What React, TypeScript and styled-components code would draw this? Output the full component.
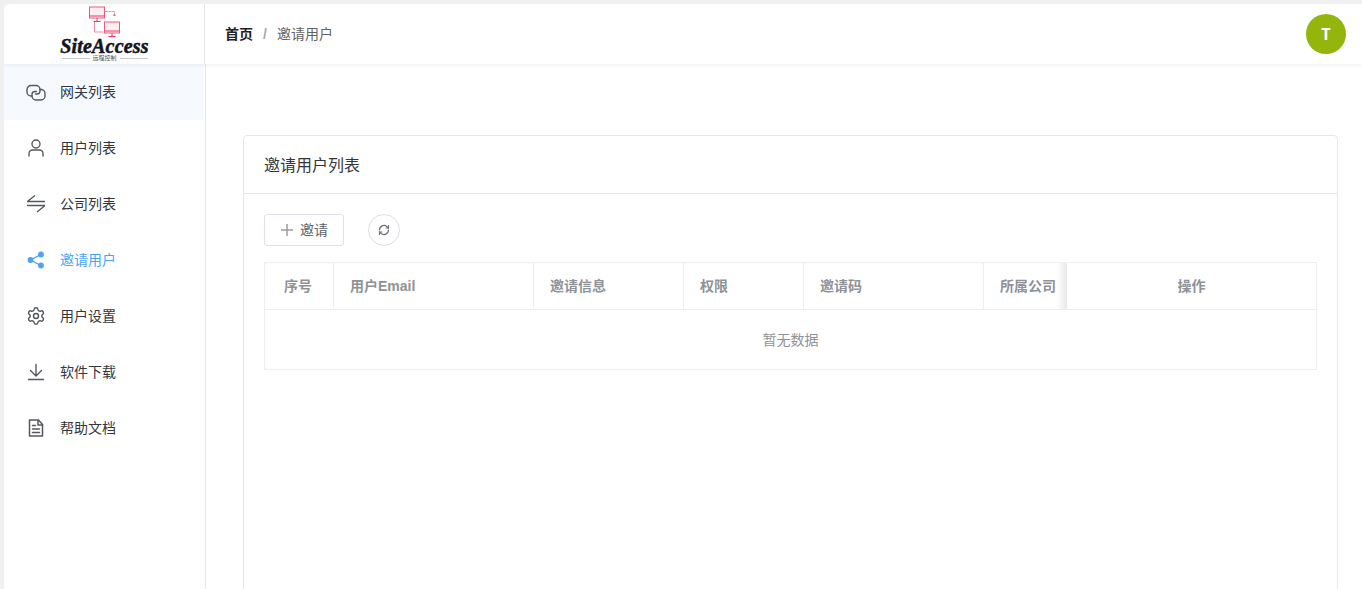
import React from "react";
import styled, { createGlobalStyle } from "styled-components";

const Global = createGlobalStyle`
  html, body { margin: 0; padding: 0; height: 100%; background: #fff; overflow: hidden; }
  body { font-family: "Liberation Sans", "Noto Sans CJK SC", sans-serif; }
  #root { height: 100%; }
  * { box-sizing: border-box; }
`;

const Page = styled.div`
  height: 589px;
  overflow: hidden;
  background: #f0f0f0;
  padding: 4px 0 0 4px;
`;
const Shell = styled.div`
  height: 100%;
  background: #fff;
  border-top-left-radius: 6px;
  display: flex;
  flex-direction: column;
  overflow: hidden;
`;
const TopBar = styled.header`
  height: 60px;
  flex: none;
  display: flex;
  align-items: stretch;
  box-shadow: 0 1px 4px rgba(0, 0, 0, 0.07);
  position: relative;
  z-index: 1;
`;
const LogoCell = styled.div`
  width: 201px;
  flex: none;
  border-right: 1px solid #e4e6ec;
  display: flex;
  flex-direction: column;
  align-items: center;
  padding-top: 2px;
`;
const LogoText = styled.div`
  font-family: "Liberation Serif", serif;
  font-weight: 700;
  font-style: italic;
  font-size: 20px;
  line-height: 14px;
  height: 14px;
  color: #14141f;
  -webkit-text-stroke: 0.5px #14141f;
  letter-spacing: 0.2px;
  margin-left: 1px;
`;
const LogoSub = styled.div`
  display: flex;
  align-items: center;
  gap: 3px;
  width: 86px;
  margin-top: 2px;
  font-size: 6px;
  line-height: 6px;
  height: 6px;
  color: #555;
  margin-left: 1px;
  &::before, &::after { content: ""; flex: 1; height: 1px; background: #c9c9c9; }
`;
const Breadcrumb = styled.nav`
  flex: 1;
  display: flex;
  align-items: center;
  padding: 0 16px 0 20px;
  font-size: 14px;
`;
const Crumb = styled.span<{ $strong?: boolean }>`
  color: ${(p) => (p.$strong ? "#1f2225" : "#5f6368")};
  font-weight: ${(p) => (p.$strong ? 700 : 400)};
  position: relative;
  top: -1px;
`;
const Sep = styled.span`
  margin: 0 9px;
  color: #a5a8ae;
  font-size: 14px;
  font-weight: 700;
  width: 6px;
  text-align: center;
`;
const Avatar = styled.div`
  margin-left: auto;
  width: 40px;
  height: 40px;
  border-radius: 50%;
  background: #93b50c;
  color: #fff;
  font-family: "Open Sans", sans-serif;
  font-weight: 700;
  font-size: 16px;
  display: flex;
  align-items: center;
  justify-content: center;
`;
const Body = styled.div`
  flex: 1;
  display: flex;
  min-height: 0;
`;
const Sidebar = styled.aside`
  width: 202px;
  flex: none;
  border-right: 1px solid #e4e6ec;
`;
const Item = styled.div<{ $active?: boolean; $current?: boolean }>`
  height: 56px;
  width: 200px;
  display: flex;
  align-items: center;
  gap: 14px;
  padding-left: 22px;
  font-size: 14px;
  background: ${(p) => (p.$current ? "#f6faff" : "transparent")};
  color: ${(p) => (p.$active ? "#4ba3f8" : "#33373c")};
  svg { flex: none; display: block; }
`;
const ItemLabel = styled.span`
  position: relative;
  top: -1px;
`;
const Content = styled.main`
  flex: 1;
  min-width: 0;
  padding: 71px 24px 0 37px;
`;
const Card = styled.section`
  border: 1px solid #e6e7ee;
  border-radius: 4px;
  height: 600px;
`;
const CardHeader = styled.div`
  height: 58px;
  border-bottom: 1px solid #e6e7ee;
  padding: 0 20px 2px;
  display: flex;
  align-items: center;
  font-size: 16px;
  color: #33373c;
`;
const CardBody = styled.div`
  padding: 20px 20px 0;
`;
const Toolbar = styled.div`
  display: flex;
  gap: 24px;
  margin-bottom: 16px;
`;
const InviteButton = styled.button`
  width: 80px;
  height: 32px;
  border: 1px solid #dcdfe6;
  border-radius: 3px;
  background: #fff;
  color: #5f6368;
  font: inherit;
  font-size: 14px;
  line-height: 28px;
  padding: 0;
  display: flex;
  align-items: center;
  justify-content: center;
  gap: 6px;
`;
const RoundButton = styled.button`
  width: 32px;
  height: 32px;
  border: 1px solid #dcdfe6;
  border-radius: 50%;
  background: #fff;
  padding: 0;
  display: flex;
  align-items: center;
  justify-content: center;
`;
const Table = styled.div`
  width: 1053px;
  border: 1px solid #eceef4;
  font-size: 14px;
`;
const HeadRow = styled.div`
  height: 47px;
  display: flex;
  border-bottom: 1px solid #eceef4;
`;
const HeadCell = styled.div<{ $w: number; $center?: boolean; $pad?: number; $last?: boolean }>`
  width: ${(p) => p.$w}px;
  flex: none;
  display: flex;
  align-items: center;
  justify-content: ${(p) => (p.$center ? "center" : "flex-start")};
  padding-left: ${(p) => p.$pad ?? 16}px;
  padding-bottom: 2px;
  border-right: ${(p) => (p.$last ? "none" : "1px solid #eceef4")};
  font-weight: 700;
  color: #8f9297;
  white-space: nowrap;
  position: relative;
`;
const FixedShadow = styled.div`
  position: absolute;
  right: 0;
  top: 0;
  bottom: 0;
  width: 10px;
  background: linear-gradient(to left, rgba(0, 0, 0, 0.09), rgba(0, 0, 0, 0));
`;
const Empty = styled.div`
  height: 59px;
  padding-bottom: 1px;
  display: flex;
  align-items: center;
  justify-content: center;
  color: #8f9297;
`;

const iconProps = {
  width: 20,
  height: 20,
  viewBox: "0 0 20 20",
  fill: "none",
  stroke: "#55585c",
  strokeWidth: 1.4,
  strokeLinecap: "round" as const,
  strokeLinejoin: "round" as const,
};

const LogoMark = () => (
  <svg width="36" height="33" viewBox="0 0 36 33" fill="none" stroke="#ee5a82" strokeWidth="1" style={{ display: "block", marginLeft: 3, flex: "none" }}>
    <rect x="1.5" y="1" width="15" height="11" fill="#fdeef2" />
    <path d="M1.5 10h15M9 12v3M5.5 15.5h7" stroke="#e8386a" />
    <path d="M17 5.500h9.500v5" strokeDasharray="3 0.6" stroke="#f08aa5" />
    <path d="M26.500 10l-1 -1h2z" />
    <path d="M6.500 16v10h9" stroke="#f08aa5" />
    <rect x="16.500" y="16" width="15" height="11" fill="#fdeef2" />
    <path d="M16.500 25h15M24 27v3M20.500 30.500h7" stroke="#e8386a" />
  </svg>
);

const GatewayIcon = () => (
  <svg {...iconProps}>
    <path d="M6 14H5a4 4 0 0 1-4-4V7.500a4 4 0 0 1 4-4h5a4 4 0 0 1 4 4V9a3 3 0 0 1-3 3H9.500" />
    <path d="M14 7.500h1a4 4 0 0 1 4 4V14a4 4 0 0 1-4 4h-5a4 4 0 0 1-4-4v-1.500a3 3 0 0 1 3-3h1.500" />
  </svg>
);
const UserIcon = () => (
  <svg {...iconProps}>
    <circle cx="10" cy="6" r="4" />
    <path d="M3 18v-2.500A3.500 3.500 0 0 1 6.500 12h7a3.500 3.500 0 0 1 3.500 3.500V18" />
  </svg>
);
const SwapIcon = () => (
  <svg {...iconProps} strokeLinecap="butt">
    <path d="M1 7.500h18M2 7l7-5.500" />
    <path d="M1 11.500h18M18.500 12L11 18" />
  </svg>
);
const ShareIcon = () => (
  <svg width="20" height="20" viewBox="0 0 20 20" fill="#4ba3f8" stroke="#4ba3f8" strokeWidth="1.4">
    <circle cx="15" cy="4.500" r="2.200" />
    <circle cx="4.500" cy="10" r="2.200" />
    <circle cx="15" cy="15.500" r="2.200" />
    <path d="M15 4.500L4.500 10L15 15.500" fill="none" />
  </svg>
);
const GearIcon = () => (
  <svg width="20" height="20" viewBox="0 0 24 24" fill="none" stroke="#55585c" strokeWidth="1.700" strokeLinecap="round" strokeLinejoin="round">
    <path d="M9.671 4.136a2.340 2.340 0 0 1 4.659 0 2.340 2.340 0 0 0 3.319 1.915 2.340 2.340 0 0 1 2.330 4.033 2.340 2.340 0 0 0 0 3.831 2.340 2.340 0 0 1-2.330 4.033 2.340 2.340 0 0 0-3.319 1.915 2.340 2.340 0 0 1-4.659 0 2.340 2.340 0 0 0-3.320-1.915 2.340 2.340 0 0 1-2.330-4.033 2.340 2.340 0 0 0 0-3.831A2.340 2.340 0 0 1 6.350 6.051a2.340 2.340 0 0 0 3.319-1.915" />
    <circle cx="12" cy="12" r="3" />
  </svg>
);
const DownloadIcon = () => (
  <svg {...iconProps}>
    <path d="M10 2.500v11M4.500 8.500l5.500 5.500 5.500-5.500M2.500 17.500h15" />
  </svg>
);
const DocIcon = () => (
  <svg {...iconProps} strokeWidth={1.5}>
    <path d="M3.500 2h9l4 4.500V18h-13z" />
    <path d="M12 2.500V7h4.500M6.500 7.500h3M6.500 11h7M6.500 14.500h7" />
  </svg>
);
const PlusIcon = () => (
  <svg width="14" height="14" viewBox="0 0 14 14" stroke="#9a9da3" strokeWidth="1.500" fill="none">
    <path d="M7 1v12M1 7h12" />
  </svg>
);
const RefreshIcon = () => (
  <svg width="12" height="12" viewBox="0 0 24 24" fill="none" stroke="#6c7075" strokeWidth="2.400" strokeLinecap="round" strokeLinejoin="round">
    <path d="M3 12a9 9 0 0 1 15-6.700L21 8" />
    <path d="M21 3v5h-5" />
    <path d="M21 12a9 9 0 0 1-15 6.700L3 16" />
    <path d="M8 16H3v5" />
  </svg>
);

const menu = [
  { label: "网关列表", icon: <GatewayIcon />, current: true },
  { label: "用户列表", icon: <UserIcon /> },
  { label: "公司列表", icon: <SwapIcon /> },
  { label: "邀请用户", icon: <ShareIcon />, active: true },
  { label: "用户设置", icon: <GearIcon /> },
  { label: "软件下载", icon: <DownloadIcon /> },
  { label: "帮助文档", icon: <DocIcon /> },
];

export default function App() {
  return (
    <Page>
      <Global />
      <Shell>
        <TopBar>
          <LogoCell>
            <LogoMark />
            <LogoText>SiteAccess</LogoText>
            <LogoSub>远程控制</LogoSub>
          </LogoCell>
          <Breadcrumb>
            <Crumb $strong>首页</Crumb>
            <Sep>/</Sep>
            <Crumb>邀请用户</Crumb>
            <Avatar>T</Avatar>
          </Breadcrumb>
        </TopBar>
        <Body>
          <Sidebar>
            {menu.map((m) => (
              <Item key={m.label} $active={m.active} $current={m.current}>
                {m.icon}
                <ItemLabel>{m.label}</ItemLabel>
              </Item>
            ))}
          </Sidebar>
          <Content>
            <Card>
              <CardHeader>邀请用户列表</CardHeader>
              <CardBody>
                <Toolbar>
                  <InviteButton>
                    <PlusIcon />
                    邀请
                  </InviteButton>
                  <RoundButton>
                    <RefreshIcon />
                  </RoundButton>
                </Toolbar>
                <Table>
                  <HeadRow>
                    <HeadCell $w={69} $pad={19}>序号</HeadCell>
                    <HeadCell $w={200}>用户Email</HeadCell>
                    <HeadCell $w={150}>邀请信息</HeadCell>
                    <HeadCell $w={120}>权限</HeadCell>
                    <HeadCell $w={180}>邀请码</HeadCell>
                    <HeadCell $w={83} $last>
                      所属公司
                      <FixedShadow />
                    </HeadCell>
                    <HeadCell $w={249} $center $pad={0} $last>操作</HeadCell>
                  </HeadRow>
                  <Empty>暂无数据</Empty>
                </Table>
              </CardBody>
            </Card>
          </Content>
        </Body>
      </Shell>
    </Page>
  );
}
